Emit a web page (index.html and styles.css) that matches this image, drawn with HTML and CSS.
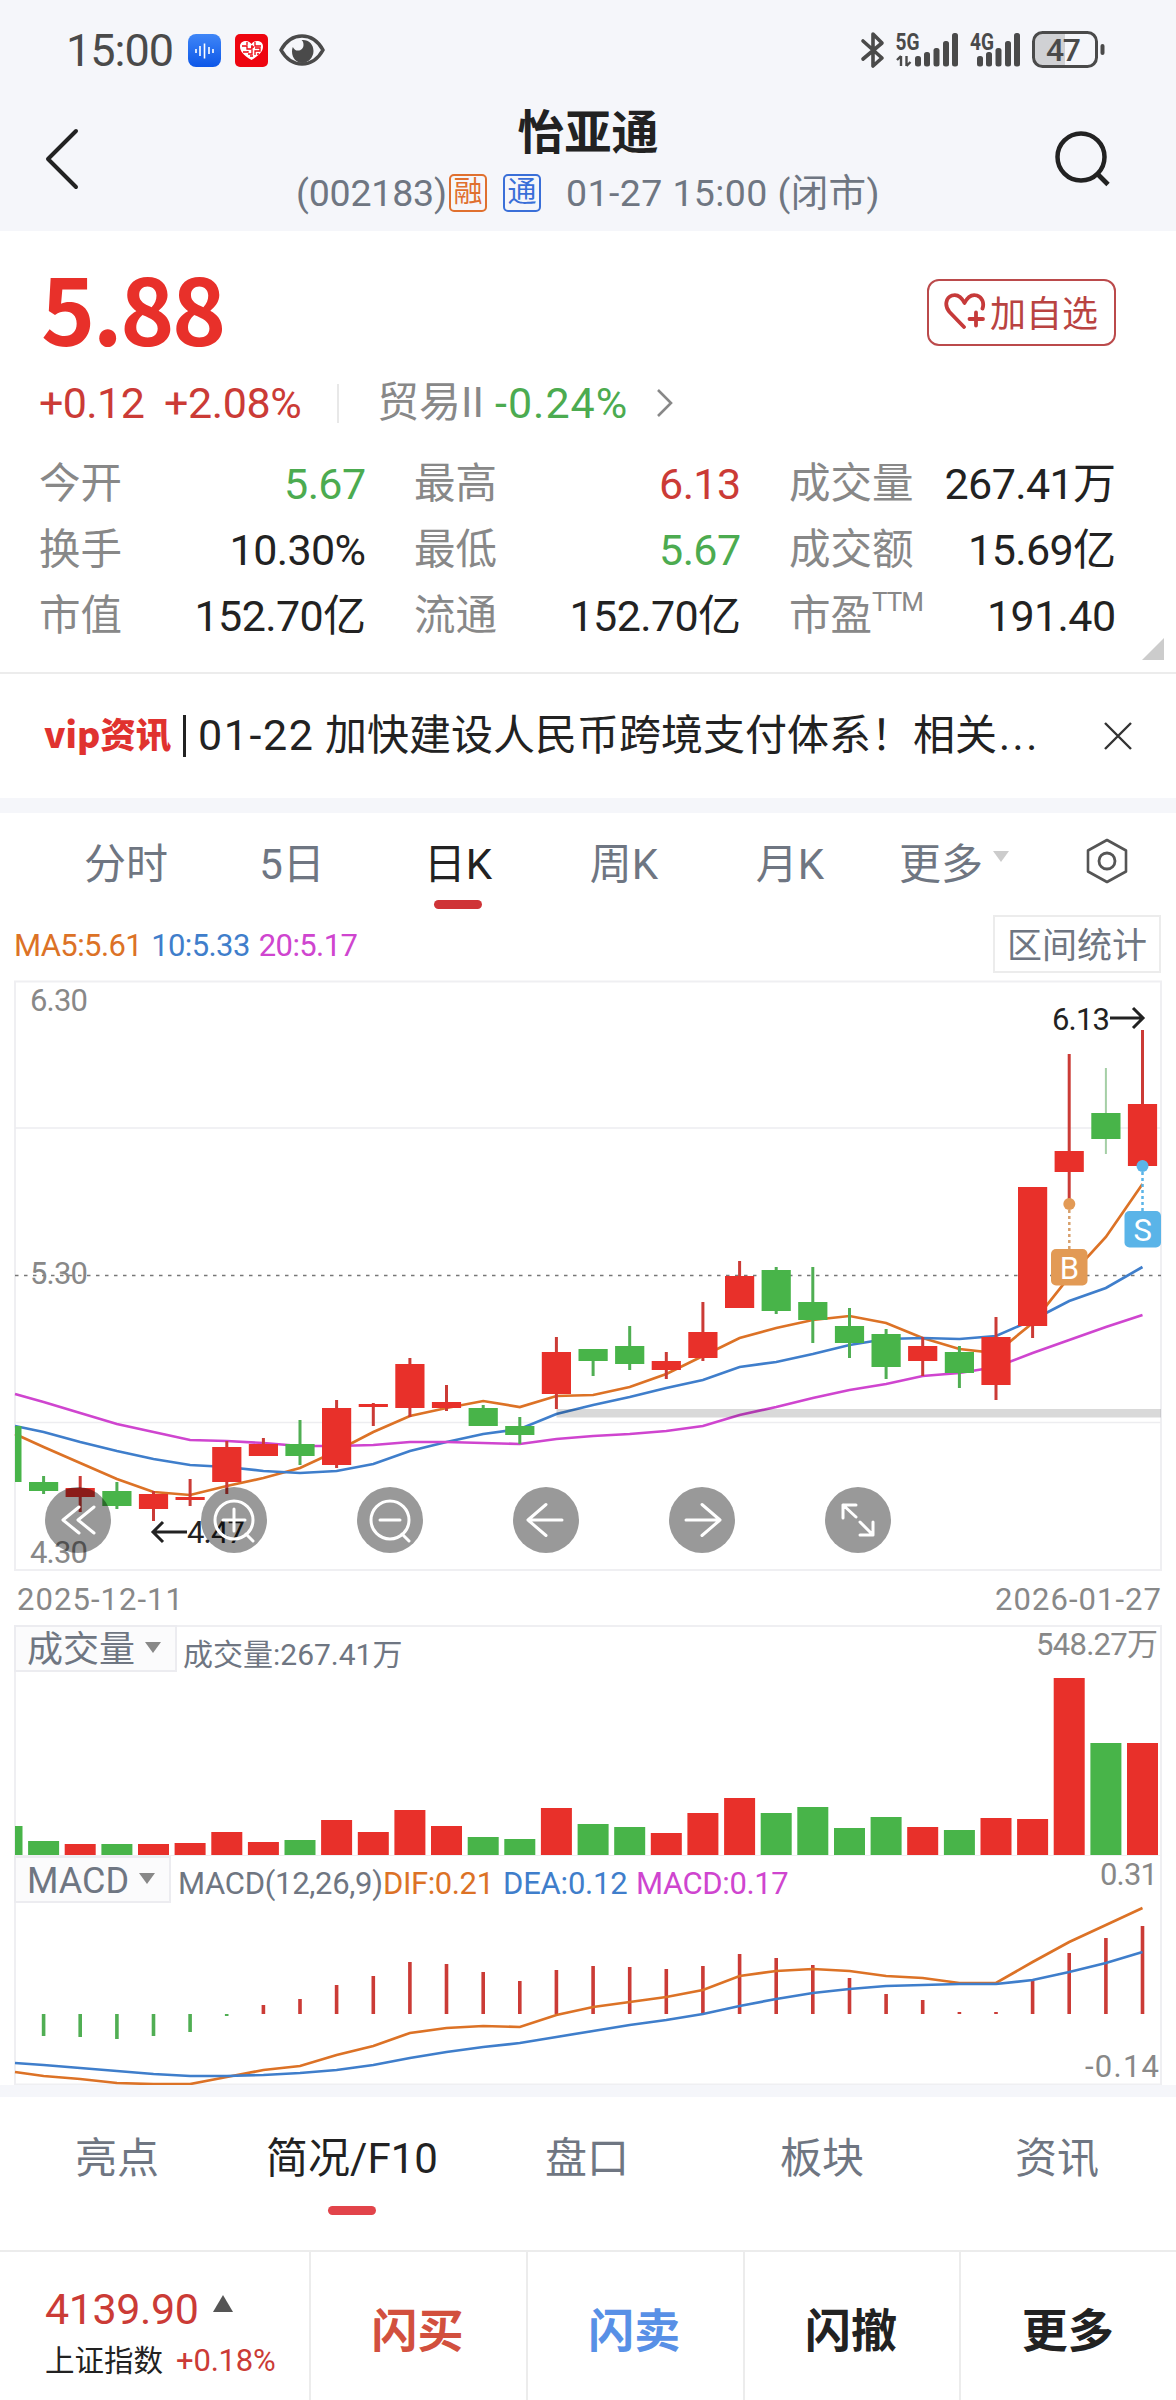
FILE: index.html
```html
<!DOCTYPE html>
<html lang="zh-CN">
<head>
<meta charset="utf-8">
<title>怡亚通 002183</title>
<link rel="stylesheet" href="styles.css">
</head>
<body>
<header class="top">
  <div class="status">
    <span class="clock">15:00</span>
    <svg class="app" width="33" height="33" viewBox="0 0 33 33"><defs><linearGradient id="bl" x1="0" y1="0" x2="0" y2="1"><stop offset="0" stop-color="#3f86f7"/><stop offset="1" stop-color="#0d57e8"/></linearGradient></defs><rect width="33" height="33" rx="8" fill="url(#bl)"/><path d="M8 15v4M12 12v10M16.500 9.500v15M21 13v7M25 15v4" stroke="#fff" stroke-width="1.600"/></svg>
    <svg class="app" width="33" height="33" viewBox="0 0 33 33"><rect width="33" height="33" rx="5" fill="#ee0510"/><path d="M16.500 26C8 21 5 17 5 12.500 5 8.500 8 7 11 7c2.500 0 4.500 1.500 5.500 3 1-1.500 3-3 5.500-3 3 0 6 1.500 6 5.500 0 4.500-3 8.500-11.500 13.500Z" fill="#fff"/><path d="M7 12h5v3h5v-4M12 8v3M20 8v4h6M8 18h5v-1M17 16v4h-4M20 14h5v3h-5v4M15 22h3M22 20h2M16 13h3" fill="none" stroke="#ee0510" stroke-width="1.300"/></svg>
    <svg class="eye" width="46" height="33" viewBox="0 0 46 33"><path d="M2 16C7 7 14 2 23 2s16 5 21 14c-5 9-12 14-21 14S7 25 2 16Z" fill="none" stroke="#4a4a4a" stroke-width="3.600" stroke-linejoin="round"/><path d="M24 6c6 0 10.500 4.500 10.500 11S29 29 23.500 29 13 24.500 13 17.500c0-1.500.2-3 .8-4.500 1.200 2.500 3 3.600 5 3.600 3.600 0 5.700-2.600 5.700-5.600 0-2-.3-3.600-2-5Z" fill="#4a4a4a"/></svg>
    <svg class="signals" width="250" height="44" viewBox="860 28 250 44">
      <path d="M863 41 882 58 873 66V34L882 43 863 59" fill="none" stroke="#4a4a4a" stroke-width="3.600" stroke-linejoin="round" stroke-linecap="round"/>
      <g fill="#4a4a4a" font-family="Roboto" font-weight="700">
        <text x="895.500" y="49.500" font-size="23" textLength="24" lengthAdjust="spacingAndGlyphs">5G</text>
        <text x="970" y="49.500" font-size="23" textLength="24" lengthAdjust="spacingAndGlyphs">4G</text>
        <path d="M901 56v10M897 60l4-4M906.500 56v10M910.500 62l-4 4" stroke="#4a4a4a" stroke-width="2.400"/>
        <rect x="915" y="56" width="6" height="10.500" rx="2.500"/><rect x="924" y="52" width="6" height="14.500" rx="2.500"/><rect x="933.500" y="48" width="6" height="18.500" rx="2.500"/><rect x="943" y="41" width="6" height="25.500" rx="2.500"/><rect x="952" y="33" width="6" height="33.500" rx="2.500"/>
        <rect x="977" y="56" width="6" height="10.500" rx="2.500"/><rect x="986" y="52" width="6" height="14.500" rx="2.500"/><rect x="995.500" y="48" width="6" height="18.500" rx="2.500"/><rect x="1005" y="41" width="6" height="25.500" rx="2.500"/><rect x="1014" y="33" width="6" height="33.500" rx="2.500"/>
      </g>
      <path d="M1065 33h-23q-8 0-8 8v17q0 8 8 8h23Z" fill="#d0d1d4"/>
      <rect x="1033.500" y="32.500" width="63" height="34" rx="9" fill="none" stroke="#4a4a4a" stroke-width="3"/>
      <rect x="1100.500" y="44" width="4" height="11" rx="2" fill="#4a4a4a"/>
      <text x="1046" y="61" font-family="Roboto" font-weight="500" font-size="32" textLength="35" fill="#4a4a4a">47</text>
    </svg>
  </div>
  <nav class="nav">
    <svg class="back" width="40" height="64" viewBox="0 0 40 64"><path d="M35 4 7 32l28 28" fill="none" stroke="#222" stroke-width="4" stroke-linecap="round" stroke-linejoin="round"/></svg>
    <div class="heading">
      <h1>怡亚通</h1>
      <div class="sub"><span class="code">(002183)</span><span class="tag tag-o">融</span><span class="tag tag-b">通</span><span class="time">01-27 15:00 (闭市)</span></div>
    </div>
    <svg class="search" width="60" height="60" viewBox="0 0 60 60"><circle cx="27" cy="27" r="23.500" fill="none" stroke="#222" stroke-width="4.500"/><path d="M43.500 44 54 54.500" stroke="#222" stroke-width="4.800"/></svg>
  </nav>
</header>

<section class="quote">
  <div class="price-row">
    <strong class="price">5.88</strong>
    <button class="fav"><svg width="42" height="36" viewBox="0 0 42 36"><path d="M20 34 5.500 19C0 12.500 2 4.500 8 2.500c5-1.500 9 .5 12.500 7.500C24 3 28 1 33 2.500c5 1.800 7.500 7.500 5.500 13" fill="none" stroke="#c63a3a" stroke-width="3.800" stroke-linecap="round" stroke-linejoin="round"/><path d="M32 19.500v13M25.500 26H39" stroke="#c63a3a" stroke-width="3.800" stroke-linecap="round"/></svg>加自选</button>
  </div>
  <div class="change">
    <span class="red chg">+0.12</span><span class="red pct">+2.08%</span><i class="sep"></i>
    <span class="sector">贸易II</span><span class="green sector-pct">-0.24%</span>
    <svg width="18" height="30" viewBox="0 0 18 30"><path d="m2 2 13 13L2 28" fill="none" stroke="#888" stroke-width="2.600"/></svg>
  </div>
  <div class="stats">
    <div><label>今开</label><span class="green">5.67</span></div>
    <div><label>最高</label><span class="red">6.13</span></div>
    <div><label>成交量</label><span>267.41万</span></div>
    <div><label>换手</label><span>10.30%</span></div>
    <div><label>最低</label><span class="green">5.67</span></div>
    <div><label>成交额</label><span>15.69亿</span></div>
    <div><label>市值</label><span>152.70亿</span></div>
    <div><label>流通</label><span>152.70亿</span></div>
    <div><label>市盈<sup>TTM</sup></label><span>191.40</span></div>
  </div>
  <i class="corner"></i>
</section>

<section class="news">
  <span class="vip">vip资讯</span><i class="bar"></i>
  <span class="headline"><b class="num">01-22</b> 加快建设人民币跨境支付体系！相关<b class="dots">...</b></span>
  <svg width="30" height="30" viewBox="0 0 30 30"><path d="m2 2 26 26M28 2 2 28" stroke="#333" stroke-width="2.400"/></svg>
</section>

<section class="chart">
  <div class="periods">
    <span>分时</span><span>5日</span><span class="on">日K</span><span>周K</span><span>月K</span><span class="more">更多<i class="drop"></i></span>
    <svg width="42" height="46" viewBox="0 0 42 46"><path d="M21 2 40 12.500V33.500L21 44 2 33.500V12.500Z" fill="none" stroke="#555" stroke-width="2.600" stroke-linejoin="round"/><circle cx="21" cy="23" r="8" fill="none" stroke="#555" stroke-width="2.800"/></svg>
  </div>
  <div class="ma">
    <span class="orange">MA5:5.61</span><span class="blue">10:5.33</span><span class="pink">20:5.17</span>
    <button class="range">区间统计</button>
  </div>
  <div class="panel">
    <svg id="kline" class="plot" width="1176" height="652" viewBox="0 973 1176 652"></svg>
    <div class="tools">
      <button><svg viewBox="0 0 66 66"><path d="M34 20 18 33l16 13M49 20 33 33l16 13"/></svg></button>
      <button><svg viewBox="0 0 66 66"><circle cx="33" cy="33" r="19"/><path d="M33 22v22M22 33h22M45 47l7 7"/></svg></button>
      <button><svg viewBox="0 0 66 66"><circle cx="33" cy="33" r="19"/><path d="M23 33h20M45 47l7 7"/></svg></button>
      <button><svg viewBox="0 0 66 66"><path d="M49 33H15M33 17.500 15 33l18 15.500"/></svg></button>
      <button><svg viewBox="0 0 66 66"><path d="M17 33h34M33 17.500 51 33 33 48.500"/></svg></button>
      <button><svg viewBox="0 0 66 66"><path d="M31 18H18v13M18 18l13 12M35 35l13 13M48 35v13H35"/></svg></button>
    </div>
  </div>
  <div class="panel">
    <svg id="volume" class="plot" width="1176" height="231" viewBox="0 1625 1176 231"></svg>
    <div class="legend"><button class="pick pick-v">成交量<i class="drop dark"></i></button><span class="vol">成交量:267.41万</span></div>
  </div>
  <div class="panel">
    <svg id="macd" class="plot" width="1176" height="229" viewBox="0 1856 1176 229"></svg>
    <div class="legend"><button class="pick pick-m">MACD<i class="drop dark"></i></button><span class="m0">MACD(12,26,9)</span><span class="orange m1">DIF:0.21</span><span class="blue m2">DEA:0.12</span><span class="pink m3">MACD:0.17</span></div>
  </div>
</section>

<section class="tabs"><span>亮点</span><span class="on">简况/F10</span><span>盘口</span><span>板块</span><span>资讯</span></section>

<footer class="trade">
  <div class="index">
    <div class="idx">4139.90<i class="up"></i></div>
    <div class="idx-name">上证指数<span class="red">+0.18%</span></div>
  </div>
  <a class="buy">闪买</a><a class="sell">闪卖</a><a>闪撤</a><a>更多</a>
</footer>
<script src="chart.js"></script>
</body>
</html>
```
FILE: styles.css
```css
* { box-sizing: border-box; }
body { margin: 0; width: 1176px; height: 2400px; overflow: hidden; background: #fff; color: #222; font-family: Roboto, "Noto Sans CJK SC", sans-serif; white-space: nowrap; }
button { font: inherit; color: inherit; background: none; border: 0; padding: 0; margin: 0; }
svg { display: block; flex: none; }
i { font-style: normal; flex: none; }
.red { color: #cb3b36; }
.green { color: #4cab50; }
.orange { color: #dc7226; }
.blue { color: #3f7ecb; }
.pink { color: #cf45cf; }

.top { background: #f5f6fa; height: 231px; }
.status { height: 100px; padding-left: 66px; display: flex; align-items: center; color: #4a4a4a; }
.clock { font-size: 45px; width: 122px; letter-spacing: -1px; line-height: 50px; padding-top: 1px; }
.app { margin-right: 14px; }
.eye { margin-left: -3px; }
.signals { margin-left: 535px; }
.nav { height: 131px; display: grid; grid-template-columns: 176px 1fr 176px; }
.back { margin: 27px 0 0 41px; }
.search { margin: 30px 0 0 54px; }
.heading { padding-top: 5px; text-align: center; }
h1 { margin: 0 0 10px; font-size: 47px; line-height: 56px; font-weight: 700; }
.sub { display: flex; justify-content: center; align-items: center; height: 44px; font-size: 37.5px; line-height: 44px; color: #6f7682; }
.code { width: 153px; letter-spacing: -.2px; text-align: left; }
.time { letter-spacing: .4px; }
.tag { width: 38px; height: 38px; line-height: 33px; border: 2px solid; border-radius: 5px; font-size: 29px; text-align: center; }
.tag-o { color: #e0702f; margin-right: 16px; }
.tag-b { color: #3a6fd8; margin-right: 25px; }

.quote { position: relative; height: 443px; padding: 47px 60px 0 39px; border-bottom: 2px solid #ececec; }
.price-row { display: flex; justify-content: space-between; height: 68px; align-items: center; }
.price { font: 700 92px/56px "Noto Sans CJK SC", sans-serif; height: 68px; color: #e8302a; letter-spacing: -2.5px; margin-left: 2px; }
.fav { width: 189px; height: 67px; border: 2px solid #bb4a4b; border-radius: 12px; display: flex; align-items: center; padding: 0 0 3px 15px; gap: 4px; font-size: 36px; color: #b94341; }
.change { display: flex; align-items: center; height: 44px; margin-top: 35px; font-size: 43px; line-height: 44px; }
.chg { width: 125px; letter-spacing: -.6px; }
.pct { width: 173px; letter-spacing: -.4px; }
.sep { width: 2px; height: 39px; background: #e8e8e8; margin-right: 38px; }
.sector { width: 118px; color: #888; font-size: 42px; }
.sector-pct { width: 161px; letter-spacing: 1px; }
.stats { margin-top: 26px; display: grid; grid-template-columns: repeat(3, 325px); column-gap: 50px; grid-auto-rows: 66px; }
.stats div { display: flex; justify-content: space-between; font-size: 43px; line-height: 66px; letter-spacing: -.6px; }
.stats span { margin-right: -1.5px; }
.stats label { color: #888; font-size: 41.500px; letter-spacing: 0; }
.stats sup { font-size: 26px; line-height: 0; vertical-align: 19px; letter-spacing: -1px; }
.corner { position: absolute; right: 12px; bottom: 12px; border: 11px solid; border-color: transparent #ccc #ccc transparent; }

.news { height: 139px; padding: 0 0 1px 44px; border-bottom: 15px solid #f5f6fa; display: flex; align-items: center; }
.vip { width: 139px; font: 900 35.5px/50px "Noto Sans CJK SC", sans-serif; color: #e0322f; padding-bottom: 6px; }
.bar { width: 3px; height: 42px; background: #222; margin-right: 12px; }
.headline { width: 905px; font-size: 42px; line-height: 60px; }
.headline b { font-weight: 400; }
.num { font-size: 43px; letter-spacing: 1.600px; }
.dots { letter-spacing: 2.500px; margin-left: 2px; }

.periods { height: 102px; padding-left: 43px; display: flex; color: #6f7682; font-size: 42px; line-height: 103px; }
.periods span { position: relative; width: 166px; text-align: center; }
.periods .more { left: -2px; }
.periods .on, .tabs .on { color: #222; }
.on::after { content: ""; position: absolute; left: 50%; width: 48px; height: 9px; margin-left: -24px; border-radius: 5px; background: #cf3437; top: 87px; }
.drop { display: inline-block; border: 8px solid transparent; border-width: 11px 8.500px 0; border-top-color: #ccc; margin-left: 10px; vertical-align: 17px; }
.drop.dark { border-top-color: #888; margin-left: 10px; vertical-align: 9px; }
.periods svg { margin: 25px 0 0 47px; }
.ma { height: 58px; display: flex; align-items: center; padding: 0 15px 0 14px; font-size: 31px; }
.ma span { margin-right: 9px; padding-top: 2px; letter-spacing: -.6px; }
.range { margin-left: auto; width: 168px; height: 58px; border: 2px solid #ececec; font-size: 35px; color: #6f7682; line-height: 60px; }
.panel { position: relative; }
.plot text { font-family: Roboto, "Noto Sans CJK SC", sans-serif; font-size: 31px; fill: #888; }
.tools { position: absolute; left: 45px; top: 514px; display: flex; gap: 90px; }
.tools button { width: 66px; height: 66px; border-radius: 50%; background: rgba(0,0,0,.4); }
.tools svg { fill: none; stroke: #fff; stroke-width: 3; stroke-linecap: round; stroke-linejoin: round; }
.legend { position: absolute; left: 14px; top: 0; display: flex; height: 47px; align-items: center; font-size: 31px; color: #6f7682; }
.pick { height: 47px; border: 2px solid #ececf0; background: #fbfbfc; font-size: 36px; line-height: 46px; text-align: left; padding-left: 11px; }
.pick-v { width: 163px; margin-right: 6px; }
.pick-m { width: 157px; margin-right: 7px; }
.vol { font-size: 30px; padding-top: 6px; }
.m0 { width: 205px; letter-spacing: -.3px; }
.m1 { width: 120px; letter-spacing: -.4px; }
.m2 { width: 133px; letter-spacing: -.2px; }
.m3 { letter-spacing: -.4px; }
.m0, .m1, .m2, .m3 { padding-top: 7px; }

.tabs { height: 167px; border-top: 12px solid #f5f6fa; border-bottom: 2px solid #ececec; display: grid; grid-template-columns: repeat(5, 235px); text-align: center; font-size: 42px; line-height: 123px; color: #6f7682; }
.tabs span { position: relative; left: -.5px; }
.tabs .on::after { top: 109px; background: #e2444a; }
.trade { height: 148px; display: grid; grid-template-columns: 309px repeat(4, 1fr); }
.trade a { border-left: 2px solid #ececec; text-align: center; font-size: 46px; font-weight: 700; line-height: 158px; padding-right: 2px; }
.trade .buy { color: #d2503e; }
.trade .sell { color: #5890e6; }
.index { padding: 32px 0 0 45px; }
.idx { font-size: 43px; line-height: 50px; color: #cb3b36; letter-spacing: -.4px; }
.up { display: inline-block; border: 10.500px solid transparent; border-width: 0 10.500px 17px; border-bottom-color: #555; margin-left: 14px; vertical-align: 12px; }
.idx-name { font-size: 29.500px; line-height: 40px; margin-top: 7px; }
.idx-name span { font-size: 31px; margin-left: 13px; letter-spacing: -.2px; }
```
FILE: chart.js
```js
// Daily candles: [direction, high, body top, body bottom, low] in chart units
const candles = [
  ['g',1476,1482,1491,1494],['r',1476,1488,1497,1512],['g',1482,1491,1506,1509],['r',1491,1494,1509,1521],
  ['r',1479,1497,1500,1506],['r',1441,1447,1482,1494],['r',1438,1444,1456,1456],['g',1420,1444,1456,1465],
  ['r',1400,1408,1465,1468],['r',1403,1404,1407,1426],['r',1358,1364,1408,1417],['r',1385,1402,1408,1411],
  ['g',1405,1408,1426,1426],['g',1417,1426,1435,1444],['r',1337,1352,1394,1409],['g',1349,1349,1361,1376],
  ['g',1326,1346,1364,1370],['r',1352,1361,1370,1379],['r',1302,1332,1358,1361],['r',1261,1276,1308,1308],
  ['g',1267,1270,1311,1314],['g',1267,1302,1320,1343],['g',1308,1326,1343,1358],['g',1329,1334,1367,1379],
  ['r',1337,1346,1361,1376],['g',1346,1352,1373,1388],['r',1317,1337,1385,1400],['r',1187,1187,1326,1338],
  ['r',1054,1151,1172,1200],['g',1068,1113,1139,1154],['r',1030,1104,1166,1166]
];
// Moving averages; the first value lies on the left frame
const ma5 = [1434,1447,1463,1479,1492,1495,1486,1478,1468,1451,1432,1416,1408,1401,1407,1396,1395,1387,1374,1356,1338,1328,1320,1316,1323,1338,1349,1353,1323,1277,1237,1184];
const ma10 = [1426,1432,1442,1451,1459,1465,1467,1471,1473,1471,1464,1451,1442,1434,1429,1414,1405,1397,1388,1380,1367,1362,1354,1345,1339,1338,1339,1336,1320,1301,1288,1267];
const ma20 = [1394,1402,1413,1424,1432,1440,1441,1443,1446,1446,1445,1442,1442,1443,1444,1439,1436,1434,1431,1426,1415,1407,1398,1390,1384,1376,1373,1367,1353,1340,1327,1315];
const volume = [1841,1844,1844,1844,1843,1832,1842,1840,1820,1832,1810,1826,1837,1839,1808,1824,1827,1833,1813,1798,1813,1807,1828,1817,1827,1830,1818,1819,1678,1743,1743];
const bars = [2036,2037,2039,2036,2032,2016,2005,1999,1985,1976,1962,1964,1972,1981,1970,1966,1967,1969,1966,1954,1958,1965,1978,1994,2000,2012,2012,1980,1953,1938,1926];
const dif = [2072,2076,2079,2083,2084,2084,2077,2070,2066,2055,2046,2033,2028,2026,2027,2015,2007,2002,1997,1990,1976,1971,1969,1971,1976,1978,1983,1983,1962,1942,1925,1908];
const dea = [2063,2065,2068,2071,2074,2076,2076,2075,2073,2070,2065,2058,2052,2047,2043,2037,2031,2025,2020,2014,2006,1999,1993,1989,1986,1985,1984,1984,1980,1972,1963,1952];

const RED = '#e8302a', GREEN = '#48b449';
const x = i => 43.6 + 36.63 * i;
const rect = (a, b, w, h, c) => `<rect x="${a.toFixed(1)}" y="${b}" width="${w}" height="${h}" fill="${c}"/>`;
const hline = y => `<path d="M15 ${y}H1161" stroke="#ededf0" stroke-width="1.500"/>`;
const curve = (ys, c) => `<polyline fill="none" stroke="${c}" stroke-width="2.700" points="${ys.map((y, i) => (i ? x(i - 1).toFixed(1) : 15) + ',' + y).join(' ')}"/>`;
const label = (s, a, y, w, fill) => `<text x="${a}" y="${y}" textLength="${w}"${fill ? ` style="fill:${fill}"` : ''}>${s}</text>`;
const frame = (y, h) => `<rect x="15" y="${y}" width="1146" height="${h}" fill="none" stroke="#efeff2" stroke-width="2"/>`;

let k = frame(981.5, 588.5) + hline(1128) + hline(1422.5) +
  '<path d="M15 1275.500H1161" stroke="#777" stroke-width="1.500" stroke-dasharray="3.500 5.500"/>' +
  curve(ma5, '#dc7226') + curve(ma10, '#3f7ecb') + curve(ma20, '#cf45cf') +
  rect(556.5, 1409, 604.5, 8.5, 'rgba(0,0,0,.15)') + rect(15, 1426, 6.5, 56, GREEN);
candles.forEach(([d, h, t, b, l], i) => {
  const c = d === 'r' ? RED : GREEN;
  const thin = i === 29;
  k += rect(x(i) - (thin ? 1 : 1.5), h, thin ? 2 : 3, l - h, thin ? '#a5cfa6' : d === 'r' ? '#cb3b36' : '#50ae53');
  k += rect(x(i) - 14.6, t, 29.2, b - t, c);
});
k += '<path d="M1069.300 1204V1250" stroke="#d8a06c" stroke-width="2.500" stroke-dasharray="3 3"/><circle cx="1069.300" cy="1204" r="6" fill="#e29a55"/>' +
  '<path d="M1142.500 1166V1211" stroke="#5ab4e8" stroke-width="2.500" stroke-dasharray="3 3"/><circle cx="1142.500" cy="1166" r="6" fill="#5ab4e8"/>' +
  '<rect x="1051" y="1249" width="36.500" height="36.500" rx="5" fill="#e29a55"/><rect x="1124.500" y="1211" width="36.500" height="36.500" rx="5" fill="#5ab4e8"/>' +
  '<text x="1069.300" y="1279" text-anchor="middle" style="fill:#fff">B</text><text x="1142.700" y="1241" text-anchor="middle" style="fill:#fff">S</text>' +
  label('6.30', 30, 1010.5, 58) + label('5.30', 30, 1284, 58) + label('4.30', 30, 1563, 58) +
  label('6.13', 1052, 1030, 58, '#222') + label('4.47', 187, 1543, 58, '#222') +
  '<path d="M1110 1018H1142M1133 1008 1143 1018 1133 1028M187 1532H155M163 1522 153 1532 163 1542" fill="none" stroke="#222" stroke-width="3"/>' +
  label('2025-12-11', 17, 1610, 166) + label('2026-01-27', 995, 1610, 166);
document.getElementById('kline').innerHTML = k;

let v = frame(1626, 230) + rect(15, 1826, 7.5, 29, GREEN);
volume.forEach((y, i) => { v += rect(x(i) - 15.5, y, 31, 1855 - y, candles[i][0] === 'r' ? RED : GREEN); });
document.getElementById('volume').innerHTML = v + label('548.27万', 1036, 1655, 122);

let m = '<path d="M15 1856V2084.500H1161V1856" fill="none" stroke="#efeff2" stroke-width="2"/>';
bars.forEach((y, i) => { m += rect(x(i) - 1.8, Math.min(y, 2014), 3.6, Math.abs(y - 2014), i < 6 ? '#50ae53' : '#cb3b36'); });
document.getElementById('macd').innerHTML = m + curve(dif, '#dc7226') + curve(dea, '#3f7ecb') + label('0.31', 1100, 1885, 58) + label('-0.14', 1085, 2077, 74);
```
